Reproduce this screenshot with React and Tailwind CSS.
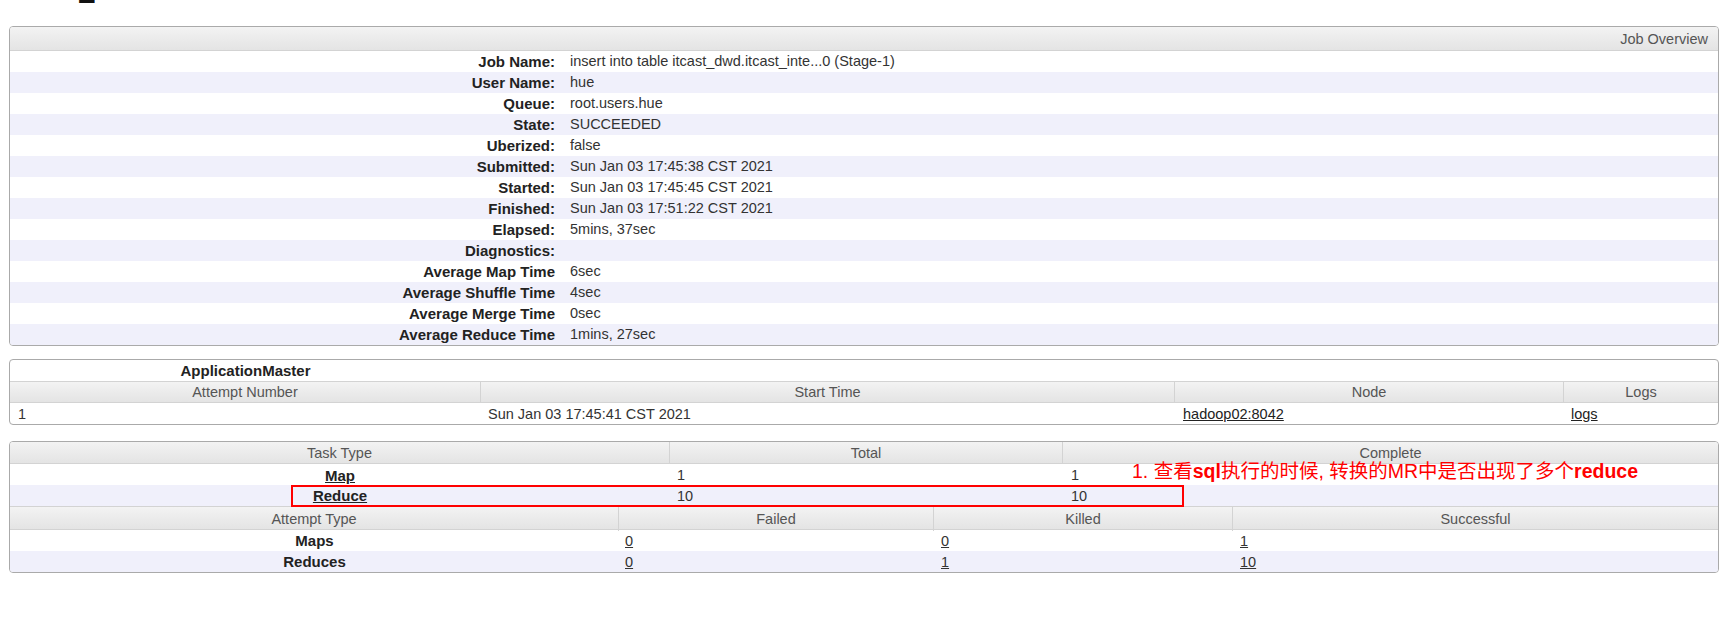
import React from "react";

const HDR = "bg-[linear-gradient(to_bottom,#f3f3f3_0%,#ececec_45%,#e4e4e4_100%)]";
const ALT = "bg-[#f0f0fb]";

const overview = [
  ["Job Name:", "insert into table itcast_dwd.itcast_inte...0 (Stage-1)"],
  ["User Name:", "hue"],
  ["Queue:", "root.users.hue"],
  ["State:", "SUCCEEDED"],
  ["Uberized:", "false"],
  ["Submitted:", "Sun Jan 03 17:45:38 CST 2021"],
  ["Started:", "Sun Jan 03 17:45:45 CST 2021"],
  ["Finished:", "Sun Jan 03 17:51:22 CST 2021"],
  ["Elapsed:", "5mins, 37sec"],
  ["Diagnostics:", ""],
  ["Average Map Time", "6sec"],
  ["Average Shuffle Time", "4sec"],
  ["Average Merge Time", "0sec"],
  ["Average Reduce Time", "1mins, 27sec"],
];

function HeadCell({ children, last }) {
  return (
    <div className={`text-center text-[#555] ${last ? "" : "border-r border-[#d3d3d3]"}`}>{children}</div>
  );
}

export default function App() {
  return (
    <div
      className="relative w-[1733px] h-[621px] bg-white text-[14.5px] text-[#333] overflow-hidden"
      style={{ fontFamily: '"Liberation Sans", Arial, "Noto Sans CJK SC", sans-serif' }}
    >
      {/* cut-off heading */}
      <div className="h-[26px] overflow-hidden">
        <div className="pl-[78px] -mt-[24px] text-[32px] leading-[32px] font-bold text-[#111]">2</div>
      </div>

      {/* Job Overview */}
      <div className="ml-[9px] w-[1710px] border border-[#aaa] rounded-[4px] overflow-hidden">
        <div className={`h-[24px] leading-[24px] ${HDR} border-b border-[#d3d3d3] text-right pr-[10px] text-[#555]`}>
          Job Overview
        </div>
        {overview.map(([k, v], i) => (
          <div
            key={k}
            className={`grid grid-cols-[553px_1fr] h-[21px] leading-[21px] ${i % 2 ? ALT : "bg-white"}`}
          >
            <div className="text-right pr-[8px] font-bold text-[15px] text-[#222]">{k}</div>
            <div className="pl-[7px]">{v}</div>
          </div>
        ))}
      </div>

      {/* ApplicationMaster */}
      <div className="mt-[13px] ml-[9px] w-[1710px] border border-[#aaa] rounded-[4px] overflow-hidden">
        <div className="grid grid-cols-[471px_1fr] h-[21px] leading-[22px]">
          <div className="text-center font-bold text-[15px] text-[#222]">ApplicationMaster</div>
          <div />
        </div>
        <div className={`grid grid-cols-[471px_694px_389px_1fr] h-[22px] leading-[21px] border-y border-[#d3d3d3] ${HDR}`}>
          <HeadCell>Attempt Number</HeadCell>
          <HeadCell>Start Time</HeadCell>
          <HeadCell>Node</HeadCell>
          <HeadCell last>Logs</HeadCell>
        </div>
        <div className="grid grid-cols-[471px_694px_389px_1fr] h-[21px] leading-[22px]">
          <div className="pl-[8px]">1</div>
          <div className="pl-[7px]">Sun Jan 03 17:45:41 CST 2021</div>
          <div className="pl-[8px]"><span className="underline text-[#222]">hadoop02:8042</span></div>
          <div className="pl-[7px]"><span className="underline text-[#222]">logs</span></div>
        </div>
      </div>

      {/* Tasks */}
      <div className="mt-[16px] ml-[9px] w-[1710px] border border-[#aaa] rounded-[4px] overflow-hidden">
        <div className={`grid grid-cols-[660px_393px_1fr] h-[22px] leading-[22px] border-b border-[#d3d3d3] ${HDR}`}>
          <HeadCell>Task Type</HeadCell>
          <HeadCell>Total</HeadCell>
          <HeadCell last>Complete</HeadCell>
        </div>
        <div className="grid grid-cols-[660px_393px_1fr] h-[21px] leading-[23px] bg-white">
          <div className="text-center font-bold text-[15px] text-[#222]"><span className="underline">Map</span></div>
          <div className="pl-[7px]">1</div>
          <div className="pl-[8px]">1</div>
        </div>
        <div className={`grid grid-cols-[660px_393px_1fr] h-[21px] leading-[22px] ${ALT}`}>
          <div className="text-center font-bold text-[15px] text-[#222]"><span className="underline">Reduce</span></div>
          <div className="pl-[7px]">10</div>
          <div className="pl-[8px]">10</div>
        </div>
        <div className={`grid grid-cols-[609px_315px_299px_1fr] h-[24px] leading-[24px] border-y border-[#d3d3d3] ${HDR}`}>
          <HeadCell>Attempt Type</HeadCell>
          <HeadCell>Failed</HeadCell>
          <HeadCell>Killed</HeadCell>
          <HeadCell last>Successful</HeadCell>
        </div>
        <div className="grid grid-cols-[609px_315px_299px_1fr] h-[21px] leading-[22px] bg-white">
          <div className="text-center font-bold text-[15px] text-[#222]">Maps</div>
          <div className="pl-[6px]"><span className="underline">0</span></div>
          <div className="pl-[7px]"><span className="underline">0</span></div>
          <div className="pl-[7px]"><span className="underline">1</span></div>
        </div>
        <div className={`grid grid-cols-[609px_315px_299px_1fr] h-[21px] leading-[22px] ${ALT}`}>
          <div className="text-center font-bold text-[15px] text-[#222]">Reduces</div>
          <div className="pl-[6px]"><span className="underline">0</span></div>
          <div className="pl-[7px]"><span className="underline">1</span></div>
          <div className="pl-[7px]"><span className="underline">10</span></div>
        </div>
      </div>

      {/* annotation overlays */}
      <div className="absolute left-[291px] top-[485px] w-[893px] h-[22px] border-2 border-[#ff0000]" />
      <div
        className="absolute left-[1132px] top-[459px] text-[19.5px] leading-[24px] text-[#ff0000] whitespace-nowrap"
        style={{ fontFamily: '"Liberation Sans", "Noto Sans CJK SC", sans-serif' }}
      >
        1. 查看<span className="font-bold">sql</span>执行的时候, 转换的MR中是否出现了多个<span className="font-bold">reduce</span>
      </div>
    </div>
  );
}
